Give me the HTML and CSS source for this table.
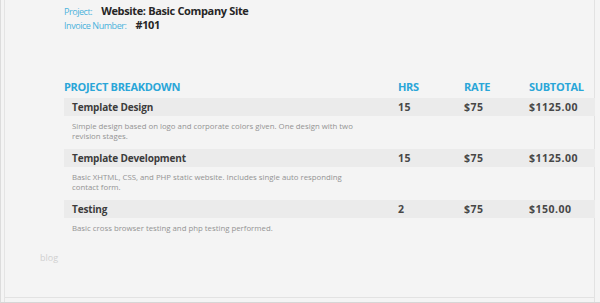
FILE: index.html
```html
<!DOCTYPE html>
<html>
<head>
<meta charset="utf-8">
<link rel="stylesheet" href="styles.css">
</head>
<body>
<div class="frame">
  <div class="meta">
    <div class="meta-row"><span class="label">Project:</span><span class="value">Website: Basic Company Site</span></div>
    <div class="meta-row"><span class="label">Invoice Number:</span><span class="value">#101</span></div>
  </div>
  <div class="table">
    <div class="head">
      <div class="c-name">PROJECT BREAKDOWN</div>
      <div class="c-num">HRS</div>
      <div class="c-num">RATE</div>
      <div class="c-num">SUBTOTAL</div>
    </div>
    <div class="item">
      <div class="band">
        <div class="c-name">Template Design</div>
        <div class="c-num">15</div>
        <div class="c-num">$75</div>
        <div class="c-num">$1125.00</div>
      </div>
      <p class="desc">Simple design based on logo and corporate colors given. One design with two<br>revision stages.</p>
    </div>
    <div class="item">
      <div class="band">
        <div class="c-name">Template Development</div>
        <div class="c-num">15</div>
        <div class="c-num">$75</div>
        <div class="c-num">$1125.00</div>
      </div>
      <p class="desc">Basic XHTML, CSS, and PHP static website. Includes single auto responding<br>contact form.</p>
    </div>
    <div class="item">
      <div class="band">
        <div class="c-name">Testing</div>
        <div class="c-num">2</div>
        <div class="c-num">$75</div>
        <div class="c-num">$150.00</div>
      </div>
      <p class="desc">Basic cross browser testing and php testing performed.</p>
    </div>
  </div>
  <div class="blog">blog</div>
</div>
</body>
</html>
```
FILE: styles.css
```css
* { box-sizing: border-box; }
html, body { margin: 0; padding: 0; }
body {
  width: 600px;
  height: 303px;
  background: #f4f4f4;
  font-family: "Open Sans", "Noto Sans", sans-serif;
  overflow: hidden;
}
.frame {
  width: 600px;
  height: 303px;
  border-left: 1px solid #dcdcdc;
  border-bottom: 1px solid #d6d6d6;
  box-shadow: inset 3px 0 0 #f4f4f4, inset 4px 0 0 #e4e4e4, inset -5px 0 0 #f4f4f4, inset -6px 0 0 #e2e2e2, inset 0 -4px 0 #f4f4f4, inset 0 -5px 0 #e2e2e2;
  padding: 4px 5px 0 63px;
}
.meta-row {
  display: flex;
  align-items: baseline;
  height: 14px;
  line-height: 14px;
}
.label {
  font-size: 9px;
  color: #4bb3dc;
  margin-right: 9px;
  letter-spacing: -0.45px;
}
.value {
  font-size: 11px;
  font-weight: 700;
  color: #262626;
  letter-spacing: -0.35px;
}
.table { margin-top: 46px; }
.head, .band {
  display: grid;
  grid-template-columns: 334px 66px 65px 1fr;
  align-items: center;
}
.head {
  height: 16px;
  color: #2aa6d8;
  font-weight: 700;
  font-size: 11px;
  letter-spacing: -0.3px;
}
.band {
  height: 18px;
  background: #ebebeb;
  margin-top: 4px;
  font-weight: 700;
  color: #3c3c3c;
}
.band .c-name { padding-left: 8px; font-size: 10px; letter-spacing: -0.15px; }
.band .c-num { font-size: 10.5px; letter-spacing: 0.5px; color: #474747; }
.desc {
  margin: 0;
  padding: 5px 0 4px 8px;
  font-size: 7.8px;
  line-height: 10px;
  color: #939393;
  min-height: 29px;
}
.item:last-child .desc { min-height: 0; }
.blog {
  margin: 14px 0 0 -24px;
  font-size: 9px;
  color: #d0d0d0;
}
```
